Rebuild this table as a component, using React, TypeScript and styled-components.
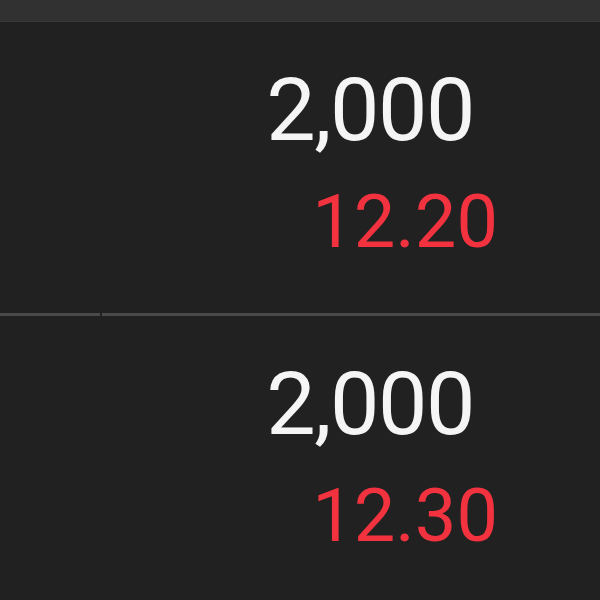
import { createGlobalStyle, styled } from "styled-components";

type Quote = {
  volume: string;
  price: string;
};

const quotes: Quote[] = [
  { volume: "2,000", price: "12.20" },
  { volume: "2,000", price: "12.30" },
];

export default function App() {
  return (
    <>
      <GlobalStyle />
      <Screen>
        <TopBar />
        {quotes.map((q, i) => (
          <Row key={i}>
            <LabelCell $last={i === quotes.length - 1} />
            <ValueCell $last={i === quotes.length - 1}>
              <Volume>{q.volume}</Volume>
              <Price>{q.price}</Price>
            </ValueCell>
          </Row>
        ))}
      </Screen>
    </>
  );
}

const GlobalStyle = createGlobalStyle`
  html, body {
    margin: 0;
    padding: 0;
    background: #212121;
  }
`;

const Screen = styled.div`
  width: 600px;
  height: 600px;
  overflow: hidden;
  background: #212121;
  font-family: Roboto, "Noto Sans", sans-serif;

  display: flex;
  flex-direction: column;
`;

const TopBar = styled.div`
  height: 21px;
  background: #313131;
  border-bottom: 1px solid #383838;
  flex-shrink: 0;
`;

const Row = styled.div`
  height: 294px;
  flex-shrink: 0;

  display: grid;
  grid-template-columns: 100px 1fr;
  column-gap: 2px;
`;

const LabelCell = styled.div<{ $last: boolean }>`
  box-sizing: border-box;
  border-bottom: ${(p) => (p.$last ? "none" : "3px solid #4a4a4a")};
`;

const ValueCell = styled.div<{ $last: boolean }>`
  box-sizing: border-box;
  border-bottom: ${(p) => (p.$last ? "none" : "3px solid #4a4a4a")};

  display: flex;
  flex-direction: column;
  align-items: flex-end;
`;

const Volume = styled.div`
  margin-top: 38px;
  padding-right: 126px;
  font-size: 88px;
  line-height: 100px;
  letter-spacing: -1.5px;
  color: #f5f5f5;
`;

const Price = styled.div`
  margin-top: 20px;
  padding-right: 102px;
  font-size: 74px;
  line-height: 84px;
  color: #f2333f;
`;
